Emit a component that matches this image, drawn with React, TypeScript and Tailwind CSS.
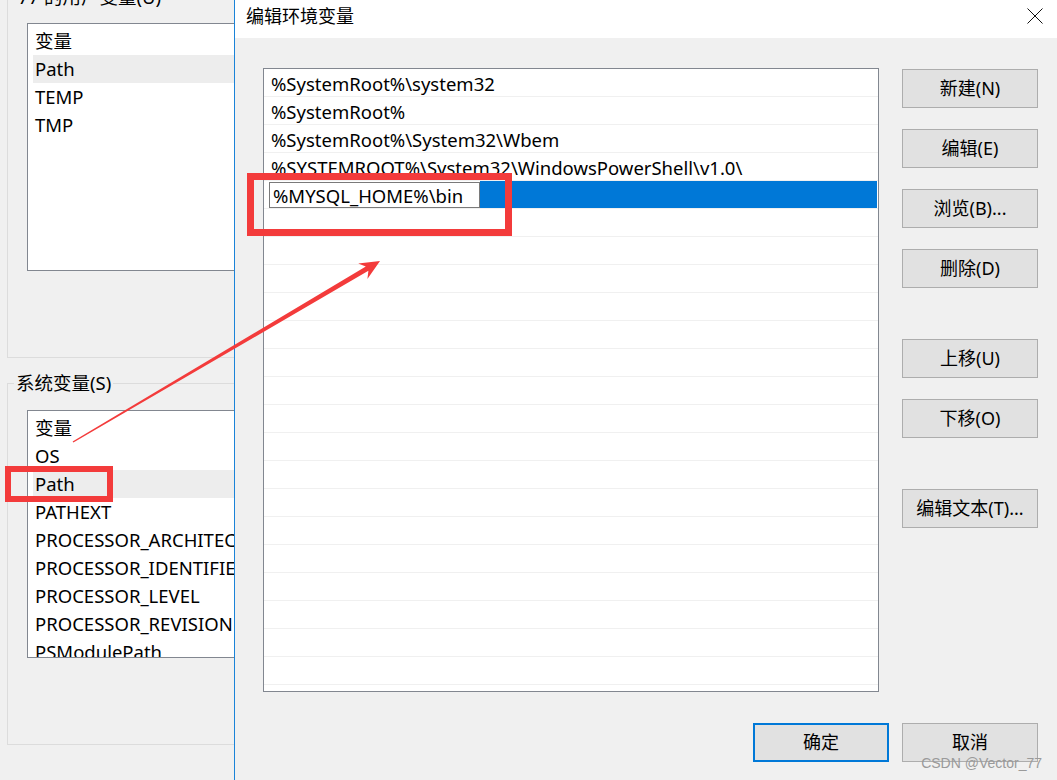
import React from 'react';

const FONT = "font-['Noto_Sans','Noto_Sans_CJK_SC',sans-serif]";

const pathItems = [
  '%SystemRoot%\\system32',
  '%SystemRoot%',
  '%SystemRoot%\\System32\\Wbem',
  '%SYSTEMROOT%\\System32\\WindowsPowerShell\\v1.0\\',
];

const userVars = ['变量', 'Path', 'TEMP', 'TMP'];
const sysVars = [
  '变量',
  'OS',
  'Path',
  'PATHEXT',
  'PROCESSOR_ARCHITECTURE',
  'PROCESSOR_IDENTIFIER',
  'PROCESSOR_LEVEL',
  'PROCESSOR_REVISION',
  'PSModulePath',
];

const VarList = ({ items }: { items: string[] }) => (
  <div className="w-[260px] h-[248px] border border-[#828790] bg-white pt-[3px] pl-[5px] overflow-hidden">
    {items.map((v) => (
      <div
        key={v}
        className={`h-[28px] pl-[2px] flex items-center whitespace-nowrap ${v === 'Path' ? 'bg-[#ededed]' : ''}`}
      >
        {v}
      </div>
    ))}
  </div>
);

const Btn = ({ label, primary, className = '' }: { label: string; primary?: boolean; className?: string }) => (
  <button
    className={`w-[136px] h-[39px] bg-[#e1e1e1] text-[18px] text-black flex items-center justify-center ${
      primary ? 'border-2 border-[#0078d7]' : 'border border-[#adadad]'
    } ${className}`}
  >
    {label}
  </button>
);

export default function App() {
  const emptyRows = Array.from({ length: 17 });

  return (
    <div className={`relative w-[1057px] h-[780px] overflow-hidden bg-[#f0f0f0] text-[18.5px] text-black ${FONT}`}>
      {/* background window: environment variables */}
      <div className="absolute left-0 top-0 w-[240px] h-full overflow-hidden">
        <div className="flex flex-col pl-[7px] mt-[-3px]">
          <div className="relative w-[260px] h-[361px] border border-[#dcdcdc] pl-[19px] pt-[25px]">
            <span className="absolute left-[8px] top-[-12px] px-[2px] bg-[#f0f0f0] leading-[22px] whitespace-nowrap">
              77 的用户变量(U)
            </span>
            <VarList items={userVars} />
          </div>
          <div className="relative w-[260px] h-[362px] mt-[25px] border border-[#dcdcdc] pl-[19px] pt-[26px]">
            <span className="absolute left-[6px] top-[-12px] px-[2px] bg-[#f0f0f0] leading-[22px] whitespace-nowrap">
              系统变量(S)
            </span>
            <VarList items={sysVars} />
          </div>
        </div>
      </div>

      {/* edit dialog */}
      <div className="absolute left-[234px] top-0 w-[823px] h-[780px] border-l border-[#1a83d8] bg-[#f0f0f0] flex flex-col">
        <div className="h-[38px] bg-white flex items-center justify-between pl-[11px] pr-[14px] pb-[6px]">
          <span className="leading-none text-[18px]">编辑环境变量</span>
          <svg width="16" height="16" viewBox="0 0 16 16">
            <path d="M0.5 0.5 L15.5 15.5 M15.5 0.5 L0.5 15.5" stroke="#111" strokeWidth="1" />
          </svg>
        </div>

        <div className="flex flex-col pt-[30px] pl-[28px] pr-[19px]">
          <div className="flex gap-[23px]">
            <div className="w-[616px] h-[624px] border border-[#828790] bg-white">
              {pathItems.map((p) => (
                <div key={p} className="h-[28px] border-b border-[#f0f0f0] pl-[7px] pt-[2px] flex items-center whitespace-nowrap">
                  {p}
                </div>
              ))}
              <div className="h-[28px] border-b border-[#f0f0f0] flex items-center">
                <div className="ml-[5px] w-[211px] h-[26px] border border-[#7a7a7a] bg-white pl-[3px] pt-[2px] flex items-center whitespace-nowrap">
                  %MYSQL_HOME%\bin
                </div>
                <div className="flex-1 h-[27px] bg-[#0078d7] mr-[1px]" />
              </div>
              {emptyRows.map((_, i) => (
                <div key={i} className="h-[28px] border-b border-[#f0f0f0]" />
              ))}
            </div>

            <div className="flex flex-col mt-[1px]">
              <div className="flex flex-col gap-[21px]">
                <Btn label="新建(N)" />
                <Btn label="编辑(E)" />
                <Btn label="浏览(B)..." />
                <Btn label="删除(D)" />
              </div>
              <div className="flex flex-col gap-[21px] mt-[51px]">
                <Btn label="上移(U)" />
                <Btn label="下移(O)" />
              </div>
              <Btn label="编辑文本(T)..." className="mt-[51px]" />
            </div>
          </div>

          <div className="flex justify-end gap-[13px] mt-[31px]">
            <Btn label="确定" primary />
            <Btn label="取消" />
          </div>
        </div>
      </div>

      {/* red annotations */}
      <svg className="absolute inset-0 pointer-events-none" width="1057" height="780" viewBox="0 0 1057 780">
        <rect x="250.5" y="176.5" width="258" height="56" fill="none" stroke="#f33b3b" strokeWidth="7" />
        <rect x="8" y="469" width="102" height="30" fill="none" stroke="#f33b3b" strokeWidth="6" />
        <polygon
          points="72.6,441.4 365.8,266.4 358.2,263.5 380,261 367.4,278.9 368.4,270.8 73.4,442.6"
          fill="#f33b3b"
        />
      </svg>

      <div className="absolute right-[15px] bottom-[9px] text-[14px] leading-[16px] text-[#9a9a9a] font-['Liberation_Sans',sans-serif]">
        CSDN @Vector_77
      </div>
    </div>
  );
}
